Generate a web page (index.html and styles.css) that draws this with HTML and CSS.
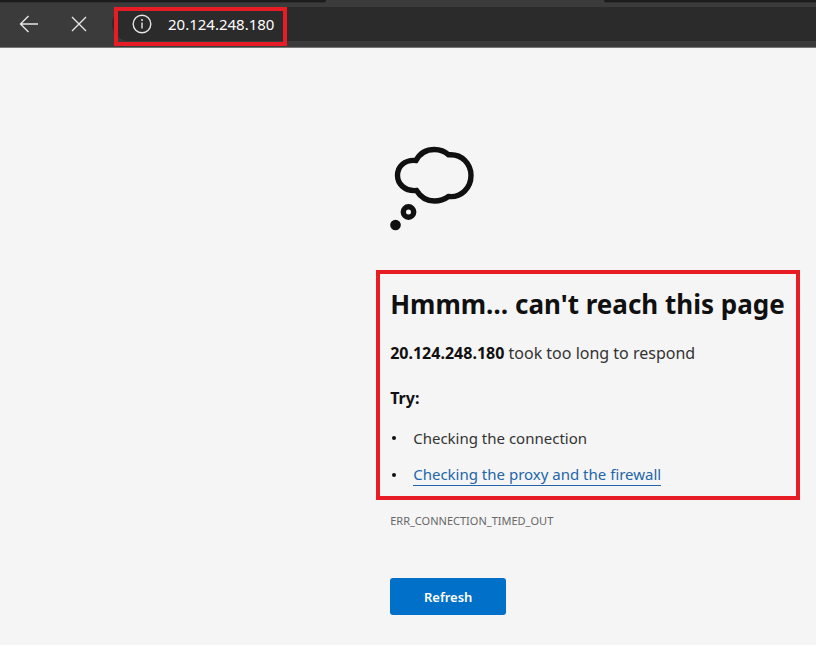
FILE: index.html
```html
<!DOCTYPE html>
<html lang="en">
<head>
    <meta charset="UTF-8">
    <meta name="viewport" content="width=device-width, initial-scale=1.0">
    <title>20.124.248.180</title>
    <link rel="stylesheet" href="styles.css">
</head>
<body>
    <header class="browser">
        <div class="tab-strip">
            <div class="tab tab-before"></div>
            <div class="tab-active"></div>
            <div class="tab tab-after"></div>
        </div>
        <div class="toolbar">
            <button type="button" class="nav-button" aria-label="Back">
                <svg width="20" height="18" viewBox="0 0 20 18" fill="none" stroke="#e6e6e6" stroke-width="1.4">
                    <path d="M19 9H1.5M9.5 1L1.5 9l8 8"/>
                </svg>
            </button>
            <button type="button" class="nav-button" aria-label="Stop">
                <svg width="16" height="16" viewBox="0 0 16 16" fill="none" stroke="#e6e6e6" stroke-width="1.4">
                    <path d="M1 1l14 14M15 1L1 15"/>
                </svg>
            </button>
            <div class="address-bar">
                <svg class="info-icon" width="20" height="20" viewBox="0 0 20 20" fill="none" stroke="#e6e6e6" stroke-width="1.4">
                    <circle cx="10" cy="10" r="8.8"/>
                    <path d="M10 8.5v6"/>
                    <circle cx="10" cy="6" r="1" fill="#e6e6e6" stroke="none"/>
                </svg>
                <input type="text" class="address" aria-label="Address" value="20.124.248.180">
                <div class="address-highlight"></div>
            </div>
        </div>
    </header>

    <main class="error-page">
        <svg class="cloud" width="84" height="86" viewBox="0 0 84 86" fill="none" stroke="#101010" stroke-width="5.4">
            <path d="M26 14.5C30 7 37 3.500 44.500 3.500C50.500 3.500 55 5.500 58.500 8.800C72 7.500 81 18 81 29.500C81 42 71 52 58.500 50.500C55 53 50 55 44.500 55C37 55 30.500 51 26.500 44.500C14.500 45.500 7.500 37.500 7.500 29.500C7.500 20.500 14.500 13.500 26 14.500Z"/>
            <circle cx="18.500" cy="66" r="5.200"/>
            <circle cx="5.500" cy="79" r="5.300" fill="#101010" stroke="none"/>
        </svg>

        <section class="message">
            <h1>Hmmm… can't reach this page</h1>
            <p><strong>20.124.248.180</strong> took too long to respond</p>
            <h2>Try:</h2>
            <ul>
                <li>Checking the connection</li>
                <li><a href="#">Checking the proxy and the firewall</a></li>
            </ul>
        </section>

        <div class="error-code">ERR_CONNECTION_TIMED_OUT</div>
        <button type="button" class="refresh">Refresh</button>
    </main>
</body>
</html>
```

FILE: styles.css
```css
* {
    box-sizing: border-box;
}
body {
    margin: 0;
    min-height: 100vh;
    display: flex;
    flex-direction: column;
    font-family: "Segoe UI", "Noto Sans", sans-serif;
    background: #f5f5f5;
    color: #101010;
    border-bottom: 1px solid #fff;
}
.browser {
    background: #3b3b3b;
    border-bottom: 1px solid #777;
}
.tab-strip {
    display: flex;
    height: 3px;
}
.tab {
    background: #1c1c1c;
    border-bottom: 1px solid #303030;
}
.tab-before {
    width: 40%;
    border-bottom-right-radius: 3px;
}
.tab-active {
    width: 34%;
}
.tab-after {
    flex: 1;
    border-bottom-left-radius: 3px;
}
.toolbar {
    display: flex;
    align-items: center;
    height: 44px;
    padding: 0 0 2px 4px;
}
.nav-button {
    display: flex;
    align-items: center;
    justify-content: center;
    width: 50px;
    height: 32px;
    padding: 0;
    border: none;
    background: none;
    cursor: pointer;
}
.address-bar {
    position: relative;
    display: flex;
    flex: 1;
    align-items: center;
    height: 34px;
    margin-left: 8px;
    padding-left: 20px;
    background: #2b2b2b;
    border-radius: 17px 0 0 17px;
}
.address {
    flex: 1;
    min-width: 0;
    padding: 0;
    margin-left: 16px;
    border: none;
    outline: none;
    background: none;
    color: #fff;
    font-family: inherit;
    font-size: 15px;
}
.address-highlight {
    position: absolute;
    top: 0;
    left: 2px;
    width: 173px;
    height: 39px;
    border: 4px solid #e81c24;
    pointer-events: none;
}
.error-page {
    display: flex;
    flex-direction: column;
    align-items: flex-start;
    padding: 98px 16px 30px 46.1%;
}
.cloud {
    margin-left: 14px;
}
.message {
    align-self: stretch;
    margin-top: 38px;
    padding: 10px 0 3px 10px;
    border: 4px solid #e81c24;
}
h1 {
    margin: 0;
    font-size: 26px;
    line-height: 40px;
}
.message p {
    margin: 17px 0 0;
    font-size: 16px;
    line-height: 24px;
    color: #333;
}
strong {
    color: #101010;
}
h2 {
    margin: 21px 0 0;
    font-size: 16px;
    line-height: 24px;
}
ul {
    margin: 9px 0 0;
    padding: 0;
    list-style: none;
}
li {
    display: flex;
    align-items: center;
    height: 37px;
    font-size: 15px;
    line-height: 22px;
    color: #333;
}
li::before {
    content: "";
    width: 4px;
    height: 4px;
    margin: 0 17px 0 2px;
    border-radius: 50%;
    background: #101010;
}
li a {
    color: #2266aa;
    text-decoration: none;
    border-bottom: 1px solid #2266aa;
}
.error-code {
    margin: 12px 0 0 14px;
    font-size: 11px;
    line-height: 18px;
    color: #666;
}
.refresh {
    width: 116px;
    height: 37px;
    margin: 48px 0 0 14px;
    border: none;
    border-radius: 3px;
    background: #0070c8;
    color: #fff;
    font-family: inherit;
    font-size: 13px;
    font-weight: 600;
    cursor: pointer;
}
.refresh:hover {
    background: #005ba1;
}
```
